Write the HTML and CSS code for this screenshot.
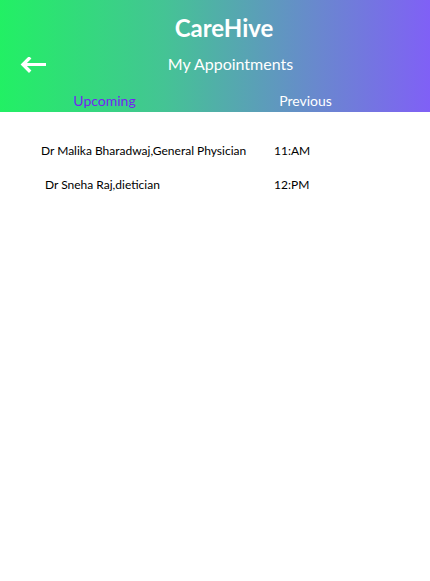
FILE: index.html
```
<!DOCTYPE html>
<html lang="en">
<head>
<meta charset="utf-8">
<title>CareHive - My Appointments</title>
<link rel="stylesheet" href="styles.css">
</head>
<body>
<header class="header">
  <h1 class="brand">CareHive</h1>
  <div class="subbar">
    <button class="back" aria-label="Back">
      <svg width="26" height="16" viewBox="0 0 26 16">
        <path d="M9 1.5 L3 7.5 L9 13.5" fill="none" stroke="#fff" stroke-width="3.4" stroke-linecap="square" stroke-linejoin="miter"/>
        <path d="M4 7.5 H26" stroke="#fff" stroke-width="3"/>
      </svg>
    </button>
    <h2 class="page-title">My Appointments</h2>
  </div>
  <nav class="tabs">
    <span class="tab tab-active">Upcoming</span>
    <span class="tab">Previous</span>
  </nav>
</header>
<main class="list">
  <div class="row">
    <span class="who">Dr Malika Bharadwaj,General Physician</span>
    <span class="time">11:AM</span>
  </div>
  <div class="row">
    <span class="who who-indent">Dr Sneha Raj,dietician</span>
    <span class="time">12:PM</span>
  </div>
</main>
</body>
</html>
```
FILE: styles.css
```
* { box-sizing: border-box; }
html, body {
  margin: 0;
  padding: 0;
  background: #fff;
  font-family: Lato, "Open Sans", sans-serif;
}
.header {
  height: 112px;
  background: linear-gradient(90deg, #22f064 0%, #44c494 38%, #6a86d0 75%, #8060f6 100%);
  color: #fff;
  padding-top: 14px;
}
.brand {
  margin: 0;
  font-size: 24px;
  line-height: 28px;
  font-weight: 700;
  text-align: center;
  padding-left: 18px;
}
.subbar {
  display: flex;
  align-items: center;
  margin-top: 12px;
  padding: 0 15px 0 20px;
  height: 20px;
}
.back {
  width: 26px;
  height: 16px;
  padding: 0;
  border: 0;
  background: none;
  display: flex;
  margin-top: 2px;
}
.page-title {
  flex: 1;
  margin: 0;
  font-size: 16px;
  line-height: 20px;
  font-weight: 400;
  text-align: center;
}
.tabs {
  display: grid;
  grid-template-columns: 209px 193px;
  margin-top: 19px;
}
.tab {
  font-size: 14px;
  line-height: 16px;
  text-align: center;
}
.tab-active { color: #7424f2; }
.list {
  padding: 31px 0 0 41px;
  display: flex;
  flex-direction: column;
  gap: 19px;
}
.row {
  display: grid;
  grid-template-columns: 233px auto;
  font-size: 12px;
  line-height: 15px;
  color: #000;
}
.who-indent { padding-left: 4px; }
```
